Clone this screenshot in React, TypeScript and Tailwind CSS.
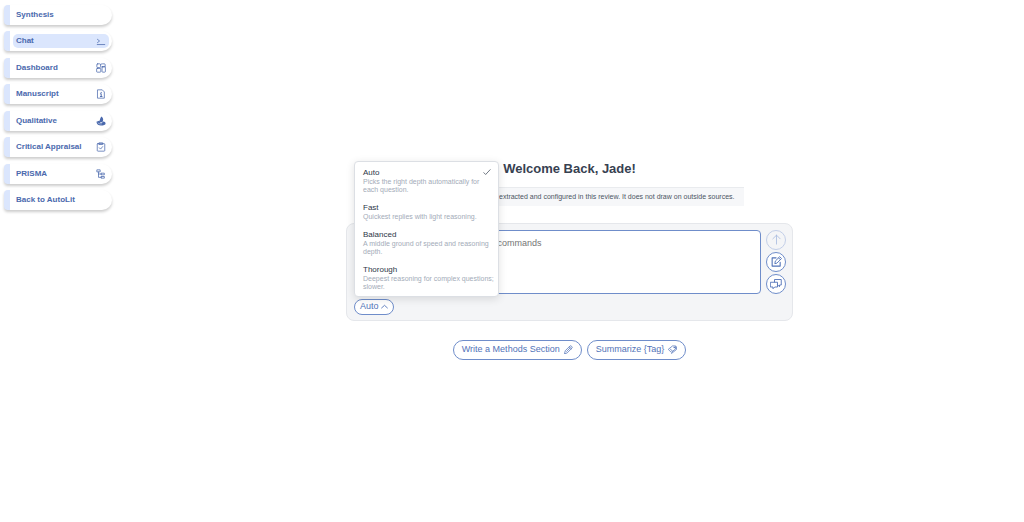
import React, { useState } from "react";

type IconProps = { className?: string };

const Svg = ({ className, children }: IconProps & { children: React.ReactNode }) => (
  <svg
    viewBox="0 0 24 24"
    fill="none"
    stroke="currentColor"
    strokeWidth={1.8}
    strokeLinecap="round"
    strokeLinejoin="round"
    aria-hidden="true"
    className={className}
  >
    {children}
  </svg>
);

const PromptIcon = ({ className }: IconProps) => (
  <Svg className={className}>
    <path d="M3.500 8l5 4-5 4M3 20.500h18" />
  </Svg>
);
const DashboardIcon = ({ className }: IconProps) => (
  <Svg className={className}>
    <rect x="2" y="2" width="9" height="9" rx="2" />
    <path d="M11 4c1-2 3-2 5-2h4c1.500 0 2 .5 2 2v5h-8" />
    <rect x="1.500" y="13" width="10" height="9" rx="1.500" />
    <rect x="14.500" y="9" width="8" height="13" rx="1.500" />
  </Svg>
);
const ManuscriptIcon = ({ className }: IconProps) => (
  <Svg className={className}>
    <path d="M4.500 2H15l5 5v15H4.500z" />
    <path d="M12.500 8v1M10.500 11.500h2V18M10.500 18h4" strokeWidth={2.2} />
  </Svg>
);
const QualitativeIcon = ({ className }: IconProps) => (
  <Svg className={className}>
    <path d="M13 1c3 2 5 6 4 9l-1.500 5H10C8 10 10 5 13 1z" fill="currentColor" stroke="none" />
    <path
      d="M1 14l8-3 1 5 4 1 3-4c4 0 6 2 6 5 0 3.500-5 5-11 5S2 21 1 14z"
      fill="currentColor"
      stroke="none"
    />
    <path d="M5 17c2 1.500 5 2.500 8 2" stroke="#fff" strokeWidth={1.2} />
  </Svg>
);
const ClipboardIcon = ({ className }: IconProps) => (
  <Svg className={className}>
    <rect x="3" y="4" width="18" height="18" rx="1.500" />
    <path d="M8 2h8v4H8zM8 14l3 3 5-6" />
  </Svg>
);
const TreeIcon = ({ className }: IconProps) => (
  <Svg className={className}>
    <rect x="3" y="2" width="7" height="5" />
    <rect x="13" y="10" width="7" height="4" />
    <rect x="13" y="18" width="7" height="4" />
    <path d="M6 7v13h7M6 12h7" />
  </Svg>
);
const CheckIcon = ({ className }: IconProps) => (
  <Svg className={className}>
    <path d="M2.500 14l5.500 5.500L21.500 5" strokeWidth={2.4} />
  </Svg>
);
const ChevronUpIcon = ({ className }: IconProps) => (
  <Svg className={className}>
    <path d="M2 17l10-9 10 9" strokeWidth={3} />
  </Svg>
);
const ArrowUpIcon = ({ className }: IconProps) => (
  <Svg className={className}>
    <path d="M12 22V2.500M4 10.500l8-8 8 8" />
  </Svg>
);
const ComposeIcon = ({ className }: IconProps) => (
  <Svg className={className}>
    <path d="M11 4H2.500v18H20v-8" strokeWidth={2.4} />
    <path d="M8.500 16l1-5L19 1.500l4 4L13.500 15zM16.500 4l4 4" strokeWidth={2} />
  </Svg>
);
const ChatsIcon = ({ className }: IconProps) => (
  <Svg className={className}>
    <path d="M9 8V3h13.500v11H19v3.500L15.500 14" />
    <path d="M1.500 8.500h13.500v9.500H9.500L6 21.500V18H1.500z" />
  </Svg>
);
const PencilIcon = ({ className }: IconProps) => (
  <Svg className={className}>
    <path
      d="M1.500 22.500l2-7.500L16 2.500c2-2 7.500 3 5.500 5.500L9 20.500zM14 5l5.500 5M7 17l9-9"
      strokeWidth={2}
    />
  </Svg>
);
const TagIcon = ({ className }: IconProps) => (
  <Svg className={className}>
    <path d="M1.500 11L12 2.500h8.500L20 10.500 9.500 19z" strokeWidth={2} />
    <path d="M9.500 22.500L22.500 12V5M6.500 11.500l5 4" strokeWidth={2} />
    <circle cx="16.500" cy="6.500" r="1.200" />
  </Svg>
);

type NavEntry = { label: string; Icon?: React.ComponentType<IconProps>; active?: boolean };

const NAV: NavEntry[] = [
  { label: "Synthesis" },
  { label: "Chat", Icon: PromptIcon, active: true },
  { label: "Dashboard", Icon: DashboardIcon },
  { label: "Manuscript", Icon: ManuscriptIcon },
  { label: "Qualitative", Icon: QualitativeIcon },
  { label: "Critical Appraisal", Icon: ClipboardIcon },
  { label: "PRISMA", Icon: TreeIcon },
  { label: "Back to AutoLit" },
];

const DEPTHS = [
  { name: "Auto", text: "Picks the right depth automatically for each question." },
  { name: "Fast", text: "Quickest replies with light reasoning." },
  { name: "Balanced", text: "A middle ground of speed and reasoning depth." },
  { name: "Thorough", text: "Deepest reasoning for complex questions; slower." },
];

function Sidebar() {
  return (
    <nav aria-label="Review" className="w-[115px] shrink-0 pt-[5px] pr-[3px] pl-1">
      <ul className="flex h-[205px] flex-col justify-between">
        {NAV.map(({ label, Icon, active }) => (
          <li key={label}>
            <a
              href="#"
              aria-current={active ? "page" : undefined}
              className="flex h-5 items-center rounded-l-[4px] rounded-r-[10px] border-l-[6px] border-[#dbe6fd] bg-white px-[3px] text-[8px] font-bold text-[#4a69ad] shadow-[0_2px_3px_rgba(0,0,0,0.2)]"
            >
              <span
                className={
                  active
                    ? "flex h-[14px] flex-1 items-center justify-between rounded-[5px] bg-[#dbe6fd] px-[3px]"
                    : "flex h-[14px] flex-1 items-center justify-between px-[3px]"
                }
              >
                {label}
                {Icon && <Icon className="size-[10px]" />}
              </span>
            </a>
          </li>
        ))}
      </ul>
    </nav>
  );
}

function DepthPicker() {
  const [open, setOpen] = useState(true);
  const [depth, setDepth] = useState("Auto");
  return (
    <div className="relative mt-[5px] w-fit">
      <button
        type="button"
        aria-expanded={open}
        onClick={() => setOpen(!open)}
        className="flex h-4 items-center gap-[2px] rounded-full border border-[#6f8dca] bg-white px-[5px] text-[9px] text-[#5273b8]"
      >
        {depth}
        <ChevronUpIcon className="size-[7px]" />
      </button>
      {open && (
        <ul
          role="listbox"
          aria-label="Reasoning depth"
          className="absolute bottom-[18px] left-0 z-10 w-[145px] rounded-[4px] border border-[#dcdfe4] bg-white py-px shadow-[0_2px_8px_rgba(0,0,0,0.12)]"
        >
          {DEPTHS.map(({ name, text }) => (
            <li key={name} role="option" aria-selected={name === depth}>
              <button
                type="button"
                onClick={() => setDepth(name)}
                className="block w-full py-1 pr-[2px] pl-2 text-left"
              >
                <span className="flex items-center justify-between pr-[5px] text-[8px] leading-[11px] text-[#2d3748]">
                  {name}
                  {name === depth && <CheckIcon className="size-[8px] text-[#4b5563]" />}
                </span>
                <span className="block text-[7px] leading-[8px] text-[#a3abb8]">{text}</span>
              </button>
            </li>
          ))}
        </ul>
      )}
    </div>
  );
}

const roundButton =
  "flex size-5 items-center justify-center rounded-full border border-[#6f8dca] bg-white text-[#5273b8] disabled:border-[#c3cfe8] disabled:bg-transparent disabled:text-[#a9bbe0]";

const chip =
  "flex h-5 items-center gap-1 rounded-full border border-[#6f8dca] bg-white px-2 text-[9px] text-[#5273b8]";

export default function App() {
  return (
    <div className="flex min-h-screen bg-white font-['Liberation_Sans',Arial,sans-serif]">
      <Sidebar />
      <main className="flex min-w-0 flex-1 flex-col items-center justify-center pb-[2px]">
        <h1 className="text-[13px] leading-[15px] font-bold text-[#374151]">Welcome Back, Jade!</h1>
        <p className="mt-[11px] flex h-[19px] items-center border-t border-[#e9ebee] bg-[#f6f7f9] px-[10px] pt-[2px] text-[7px] whitespace-nowrap text-[#4b5563]">
          Chat replies use only the data extracted and configured in this review. It does not draw on outside sources.
        </p>
        <form
          onSubmit={(e) => e.preventDefault()}
          className="mt-[17px] w-full max-w-[447px] rounded-[8px] border border-[#e5e7eb] bg-[#f4f5f7] pt-[6px] pr-[6px] pb-[5px] pl-[7px]"
        >
          <div className="flex gap-[5px]">
            <textarea
              aria-label="Message"
              placeholder="Ask any question, or type / to see commands"
              className="h-16 min-w-0 flex-1 resize-none rounded-[4px] border border-[#6f8dca] bg-white px-[7px] py-[6px] text-[9px] leading-[12px] text-[#374151] outline-none placeholder:text-[#757575]"
            />
            <div className="flex flex-col gap-[2px]">
              <button type="submit" disabled aria-label="Send" className={roundButton}>
                <ArrowUpIcon className="size-[11px]" />
              </button>
              <button type="button" aria-label="New chat" className={roundButton}>
                <ComposeIcon className="size-[11px]" />
              </button>
              <button type="button" aria-label="Chat history" className={roundButton}>
                <ChatsIcon className="size-[12px]" />
              </button>
            </div>
          </div>
          <DepthPicker />
        </form>
        <div className="mt-[19px] flex gap-[5px]">
          <button type="button" className={chip}>
            Write a Methods Section
            <PencilIcon className="size-[9px]" />
          </button>
          <button type="button" className={chip}>
            {"Summarize {Tag}"}
            <TagIcon className="size-[9px]" />
          </button>
        </div>
      </main>
    </div>
  );
}
